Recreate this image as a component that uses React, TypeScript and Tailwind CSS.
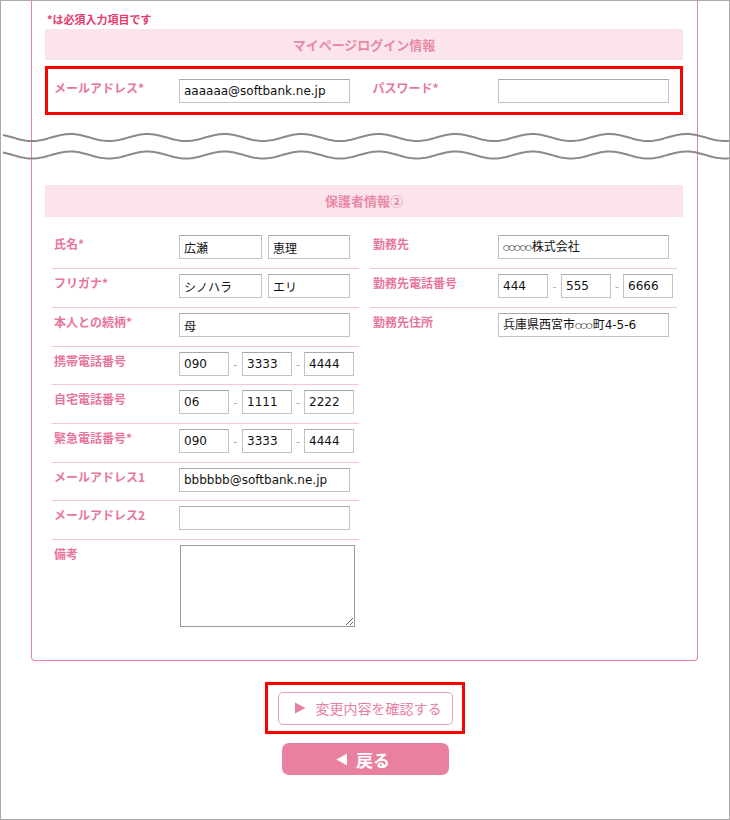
import React from 'react';

const labelCls = 'text-[12px] font-bold leading-[18px] text-[#e8769c]';
const inputCls =
  'h-[24px] border border-[#c2c2c2] border-t-[#a9a9a9] bg-white px-[4px] text-[12px] text-[#111] outline-none font-["DejaVu_Sans","Noto_Sans_CJK_JP",sans-serif]';

// two gray sine lines used as the "cut" mark
function wavePath(cy: number) {
  const pts: string[] = [];
  for (let x = 2; x <= 730; x += 2) {
    const y = cy + 3.5 * Math.cos((2 * Math.PI * (x + 1 - 32)) / 77);
    pts.push(`${x === 2 ? 'M' : 'L'}${x},${y.toFixed(2)}`);
  }
  return pts.join(' ');
}

function Field({ value, w }: { value?: string; w: string }) {
  return <input readOnly value={value ?? ''} className={`${inputCls} ${w}`} />;
}

// box that looks like an input, for values with small circle marks
function FakeField({ children, w }: { children: React.ReactNode; w: string }) {
  return <div className={`${inputCls} ${w} flex items-center leading-none`}>{children}</div>;
}

function Circles({ n }: { n: number }) {
  return (
    <span className="pt-[2px] pr-[1px] text-[7.5px] font-bold tracking-[-1px] font-['DejaVu_Sans',sans-serif] text-black">
      {'○'.repeat(n)}
    </span>
  );
}

function Phone({ parts }: { parts: string[] }) {
  return (
    <div className="flex items-center">
      <Field value={parts[0]} w="w-[50px]" />
      <span className="w-[13px] text-center text-[11px] text-[#999]">-</span>
      <Field value={parts[1]} w="w-[50px]" />
      <span className="w-[12px] text-center text-[11px] text-[#999]">-</span>
      <Field value={parts[2]} w="w-[50px]" />
    </div>
  );
}

function Row({
  label,
  children,
  last,
  right,
  tight,
}: {
  label: string;
  children: React.ReactNode;
  last?: boolean;
  right?: boolean;
  tight?: boolean;
}) {
  return (
    <div
      className={`flex items-start pt-[5px] ${tight ? 'pb-[8px]' : 'pb-[9px]'} ${
        last ? '' : 'border-b border-[#f7c4d3]'
      }`}
    >
      <div className={`${labelCls} ${right ? 'w-[128px] pl-[3px]' : 'w-[127px] pl-[2px]'} shrink-0`}>
        {label}
      </div>
      {children}
    </div>
  );
}

function SectionTitle({ title, h }: { title: string; h: string }) {
  return (
    <div
      className={`${h} flex items-center justify-center bg-[#fce4ec] text-[13px] font-bold text-[#e98aa7]`}
    >
      {title}
    </div>
  );
}

export default function App() {
  return (
    <div className="w-[730px] h-[820px] border border-[#aaaaaa] bg-white overflow-hidden font-['Noto_Sans_CJK_JP',sans-serif]">
      {/* form card, top edge is cut off */}
      <div className="ml-[30px] w-[667px] border-x border-b border-[#e9839f] rounded-b-[4px] pl-[13px] pr-[14px] pt-[10px] pb-[24px]">
        <p className="pl-[2px] text-[11px] font-bold leading-[16px] text-[#e63a6e]">*は必須入力項目です</p>

        <div className="mt-[2px]">
          <SectionTitle title="マイページログイン情報" h="h-[31px]" />
        </div>

        <div className="mt-[6px] border-[3px] border-[#ff0000] px-[4px] pt-[10px] pb-[9px] grid grid-cols-2 gap-x-[11px]">
          <div className="flex items-start">
            <div className={`${labelCls} w-[127px] pl-[2px] shrink-0`}>メールアドレス*</div>
            <Field value="aaaaaa@softbank.ne.jp" w="w-[171px]" />
          </div>
          <div className="flex items-start">
            <div className={`${labelCls} w-[128px] pl-[3px] shrink-0`}>パスワード*</div>
            <Field w="w-[171px]" />
          </div>
        </div>

        {/* wavy break */}
        <div className="-ml-[44px] w-[728px] h-[70px]">
          <svg width="728" height="70" viewBox="0 115 728 70">
            <path d={wavePath(137.5)} fill="none" stroke="#8a8a8a" strokeWidth="2" />
            <path d={wavePath(155)} fill="none" stroke="#8a8a8a" strokeWidth="2" />
          </svg>
        </div>

        <SectionTitle title="保護者情報②" h="h-[32px]" />

        <div className="mt-[13px] pl-[7px] pr-[6px] grid grid-cols-2 gap-x-[11px] items-start">
          <div className="flex flex-col">
            <Row label="氏名*">
              <div className="flex gap-[6px]">
                <Field value="広瀬" w="w-[83px]" />
                <Field value="恵理" w="w-[82px]" />
              </div>
            </Row>
            <Row label="フリガナ*">
              <div className="flex gap-[6px]">
                <Field value="シノハラ" w="w-[83px]" />
                <Field value="エリ" w="w-[82px]" />
              </div>
            </Row>
            <Row label="本人との続柄*">
              <Field value="母" w="w-[171px]" />
            </Row>
            <Row label="携帯電話番号" tight>
              <Phone parts={['090', '3333', '4444']} />
            </Row>
            <Row label="自宅電話番号">
              <Phone parts={['06', '1111', '2222']} />
            </Row>
            <Row label="緊急電話番号*">
              <Phone parts={['090', '3333', '4444']} />
            </Row>
            <Row label="メールアドレス1" tight>
              <Field value="bbbbbb@softbank.ne.jp" w="w-[171px]" />
            </Row>
            <Row label="メールアドレス2">
              <Field w="w-[171px]" />
            </Row>
            <Row label="備考" last>
              <textarea
                readOnly
                className="ml-[1px] w-[175px] h-[82px] border border-[#9a9a9a] bg-white outline-none"
              />
            </Row>
          </div>

          <div className="flex flex-col">
            <Row label="勤務先" right>
              <FakeField w="w-[171px]">
                <Circles n={5} />
                <span>株式会社</span>
              </FakeField>
            </Row>
            <Row label="勤務先電話番号" right>
              <Phone parts={['444', '555', '6666']} />
            </Row>
            <Row label="勤務先住所" right last>
              <FakeField w="w-[171px]">
                <span>兵庫県西宮市</span>
                <Circles n={3} />
                <span>町4-5-6</span>
              </FakeField>
            </Row>
          </div>
        </div>
      </div>

      {/* buttons */}
      <div className="mt-[21px] mx-auto w-[200px] h-[52px] border-[3px] border-[#ff0000] flex items-center justify-center">
        <button className="w-[175px] h-[33px] border border-[#ef9cb5] rounded-[5px] bg-white flex items-center pl-[15px] gap-[10px] text-[14px] text-[#e8819f]">
          <svg width="12" height="12" viewBox="0 0 12 12">
            <path d="M1 0.5 L11.5 6 L1 11.5 Z" fill="#e8819f" />
          </svg>
          <span>変更内容を確認する</span>
        </button>
      </div>

      <div className="mt-[9px] mx-auto w-[167px] h-[32px] rounded-[7px] bg-[#e9809f] flex items-center justify-center gap-[8px] pr-[4px] text-white">
        <svg width="12" height="13" viewBox="0 0 12 13">
          <path d="M11 0.5 L0.5 6.5 L11 12.5 Z" fill="#ffffff" />
        </svg>
        <span className="text-[17px] font-bold leading-none">戻る</span>
      </div>
    </div>
  );
}
